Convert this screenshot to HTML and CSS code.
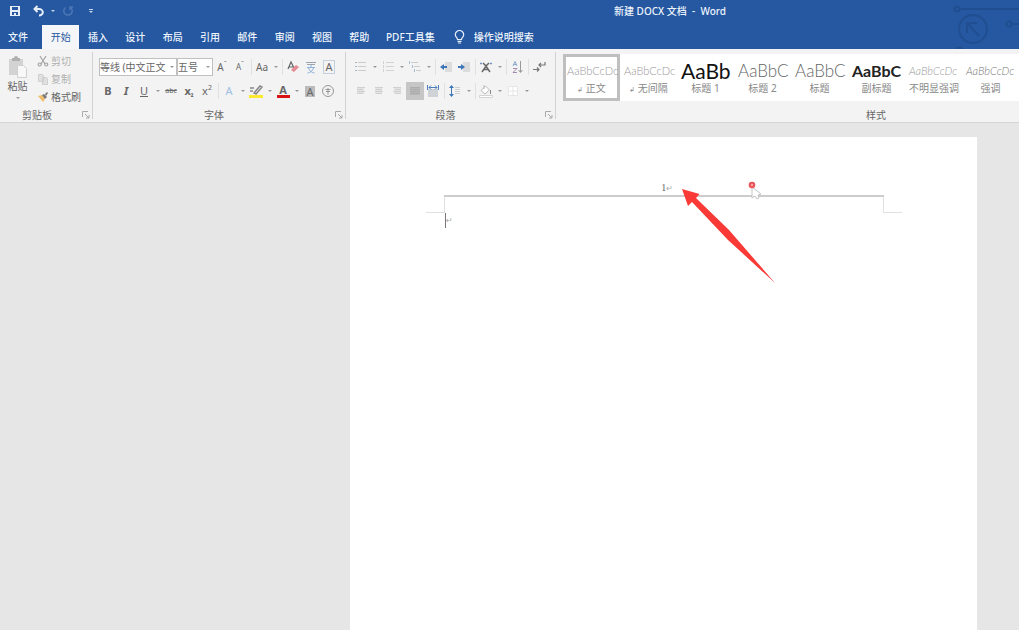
FILE: index.html
```html
<!DOCTYPE html>
<html lang="zh-CN">
<head>
<meta charset="utf-8">
<title>新建 DOCX 文档 - Word</title>
<link rel="stylesheet" href="styles.css">
</head>
<body>
<header class="top">
  <svg class="deco" width="80" height="49" viewBox="0 0 80 49" fill="none" stroke="#1f4a8c" stroke-width="2"><circle cx="18" cy="9" r="2.5"/><path d="M21 9H80M73 24h7M17 49a4 3 0 0 1 7 0"/><circle cx="70" cy="24" r="2.5"/><circle cx="34" cy="29" r="14"/><path d="M40 36 29 24M28 33V23h10"/></svg>
  <div class="titlebar">
    <div class="qat">
      <button class="qbtn" aria-label="保存"><svg width="12" height="12" viewBox="0 0 12 12"><path fill="#e6eefa" fill-rule="evenodd" d="M1 1h10v10H1zM3 2v3h6V2zM3 7v3h2V8h2v2h2V7z"/></svg></button>
      <button class="qbtn" aria-label="撤消"><svg width="14" height="12" viewBox="0 0 14 12" fill="none" stroke="#e6eefa" stroke-width="2"><path d="M5.500 1 2.500 4l3 3M3 4h4a3.500 3 0 0 1 0 6.500"/></svg></button>
      <i class="caret light"></i>
      <button class="qbtn" aria-label="重复"><svg width="12" height="12" viewBox="0 0 12 12" fill="none" stroke="#4c76b5" stroke-width="1.500"><path d="M3.500 2.500a4.200 4.200 0 1 0 5 0M8 5V2h3"/></svg></button>
      <button class="qbtn" aria-label="自定义快速访问工具栏"><svg width="6" height="6" viewBox="0 0 6 6" fill="#c8d7ee"><path d="M1 1h4v1H1zM1 3h4L3 5z"/></svg></button>
    </div>
    <h1 class="title">新建 DOCX 文档 &nbsp;-&nbsp; Word</h1>
  </div>
  <nav class="tabs">
    <button class="tab file">文件</button>
    <div class="tabgrid">
      <button class="tab active">开始</button><button class="tab">插入</button><button class="tab">设计</button><button class="tab">布局</button><button class="tab">引用</button><button class="tab">邮件</button><button class="tab">审阅</button><button class="tab">视图</button><button class="tab">帮助</button>
    </div>
    <button class="tab pdf">PDF工具集</button>
    <button class="tab tell"><svg width="11" height="14" viewBox="0 0 11 14" fill="none" stroke="#e6eefa" stroke-width="1.200"><path d="M3.500 9.500C3.500 7.500 1.300 7 1.300 4.700a4.200 4.200 0 0 1 8.400 0C9.700 7 7.500 7.500 7.500 9.500zM3.500 11.300h4M4 13h3"/></svg>操作说明搜索</button>
  </nav>
</header>

<section class="ribbon">
  <div class="group clipboard">
    <div class="controls clip">
      <button class="paste"><svg width="20" height="23" viewBox="0 0 20 23"><path fill="#d3d3d3" d="M1 3h14v16H1z"/><path fill="#b0b0b0" d="M4 2h2a2 2 0 0 1 4 0h2v3H4z"/><path fill="#f8f8f8" stroke="#d0d0d0" d="M9.500 9.500h6l3 3v9h-9z"/></svg><span>粘贴</span><i class="caret"></i></button>
      <div class="cliplist">
        <button class="clipitem off"><svg width="12" height="12" viewBox="0 0 12 12" fill="none" stroke="#a4a4a4" stroke-width="1.200"><path d="M3 1l5 8M9 1 4 9"/><circle cx="2.700" cy="9.500" r="1.500"/><circle cx="9.300" cy="9.500" r="1.500"/></svg>剪切</button>
        <button class="clipitem off"><svg width="12" height="12" viewBox="0 0 12 12" fill="#e0e0e0" stroke="#cfcfcf"><path d="M1.500 1.500h4l1 1v6h-5zM5.500 4.500h4l1 1v6h-5z"/></svg>复制</button>
        <button class="clipitem"><svg width="12" height="12" viewBox="0 0 12 12"><path fill="#f0bd6a" d="M1 5l4-1 3 4-2 3z"/><path fill="#777" d="M5 4l2-1 3 3-2 2zM8 3l2-2 1 1-2 3z"/></svg>格式刷</button>
      </div>
    </div>
    <div class="label"><span>剪贴板</span><button class="launch" aria-label="剪贴板设置"><svg width="8" height="8" viewBox="0 0 8 8" fill="none" stroke="#aaa"><path d="M.500 6V.500H6M3 3l4 4M7 4v3H4"/></svg></button></div>
  </div>

  <div class="group font">
    <div class="controls rows">
      <div class="row">
        <span class="combo"><select class="fontname" aria-label="字体"><option>等线 (中文正文</option></select><i class="caret"></i></span>
        <span class="combo"><select class="fontsize" aria-label="字号"><option>五号</option></select><i class="caret"></i></span>
        <button class="ib grow" aria-label="增大字号">A<sup>ˆ</sup></button>
        <button class="ib grow small" aria-label="减小字号">A<sup>ˇ</sup></button>
        <i class="sep"></i>
        <button class="ib aa" aria-label="更改大小写">Aa</button><i class="caret"></i>
        <i class="sep"></i>
        <button class="ib" aria-label="清除格式"><svg width="14" height="14" viewBox="0 0 14 14"><path d="M2 9 5 2l3 6M3 7h4" fill="none" stroke="#666" stroke-width="1.200"/><path fill="#e58a92" d="M5 10l5-5 3 2-5 5z"/></svg></button>
        <button class="ib" aria-label="拼音指南"><svg width="14" height="14" viewBox="0 0 14 14" fill="none"><path stroke="#9aa3ae" d="M2 2.500h10M3 4.500h8"/><path stroke="#8fb3dc" d="M3 7.500h8M4.500 8c1 3 3 4.500 6 5M9.500 8c-1 3-3 4.500-6 5M7 5v2"/></svg></button>
        <button class="ib boxed" aria-label="字符边框"><span>A</span></button>
      </div>
      <div class="row">
        <button class="ib b">B</button><button class="ib it">I</button><button class="ib u">U</button><i class="caret"></i>
        <button class="ib strike">abc</button><button class="ib b">x<sub>₂</sub></button><button class="ib">x<sup>2</sup></button>
        <i class="sep"></i>
        <button class="ib effect">A</button><i class="caret"></i>
        <button class="ib" aria-label="突出显示"><svg width="14" height="14" viewBox="0 0 14 14"><path fill="none" stroke="#888" stroke-width="1.500" d="M1 4h4M1 7h3M5 9l6-7 2 1-6 7z"/><path fill="#fbea2e" d="M0 11h14v3H0z"/></svg></button><i class="caret"></i>
        <button class="ib fc"><span>A</span></button><i class="caret"></i>
        <button class="ib shade"><span>A</span></button>
        <button class="ib" aria-label="带圈字符"><svg width="14" height="14" viewBox="0 0 14 14" fill="none" stroke="#999"><circle cx="7" cy="7" r="5.500"/><path d="M4.500 5.500h5M7 4v6.500M5 7.500h4"/></svg></button>
      </div>
    </div>
    <div class="label"><span>字体</span><button class="launch" aria-label="字体设置"><svg width="8" height="8" viewBox="0 0 8 8" fill="none" stroke="#aaa"><path d="M.500 6V.500H6M3 3l4 4M7 4v3H4"/></svg></button></div>
  </div>

  <div class="group para">
    <div class="controls rows">
      <div class="row">
        <button class="ib" aria-label="项目符号"><svg width="14" height="14" viewBox="0 0 14 14"><path stroke="#ccc" d="M4 2.500h8M4 6.500h8M4 10.500h8"/><path fill="#a9b3c1" d="M1 2h2v1H1zM1 6h2v1H1zM1 10h2v1H1z"/></svg></button><i class="caret"></i>
        <button class="ib" aria-label="编号"><svg width="14" height="14" viewBox="0 0 14 14"><path stroke="#d2d2d2" d="M5 2.500h8M5 6.500h8M5 10.500h8M2.500 1v3M2.500 5v3M2.500 9v3"/></svg></button><i class="caret"></i>
        <button class="ib" aria-label="多级列表"><svg width="14" height="14" viewBox="0 0 14 14"><path stroke="#ccc" d="M3 2.500h7M6 6.500h6M8 10.500h5"/><path stroke="#a9bcd6" d="M1.500 1v3M4.500 5v3M6.500 9v3"/></svg></button><i class="caret"></i>
        <i class="sep"></i>
        <button class="ib" aria-label="减少缩进量"><svg width="14" height="14" viewBox="0 0 14 14"><path fill="#dcdcdc" d="M6 2h7v10H6z"/><path fill="#3f76b8" d="M1 7l4-3v2h3v2H5v2z"/></svg></button>
        <button class="ib" aria-label="增加缩进量"><svg width="14" height="14" viewBox="0 0 14 14"><path fill="#dcdcdc" d="M6 2h7v10H6z"/><path fill="#3f76b8" d="M8 7 4 4v2H1v2h3v2z"/></svg></button>
        <i class="sep"></i>
        <button class="ib" aria-label="中文版式"><svg width="14" height="14" viewBox="0 0 14 14" fill="none" stroke="#666" stroke-width="1.500"><path d="M3 12 7 6l4 6M4 3l3 3 3-3M4.500 9.500h5"/><path stroke="#6f94c4" d="M1 3.500h2M11 3.500h2"/></svg></button><i class="caret"></i>
        <i class="sep"></i>
        <button class="ib" aria-label="排序"><svg width="14" height="14" viewBox="0 0 14 14" fill="none"><path stroke="#8aa7cd" d="M3 6l2-4.500L7 6M3.500 4.500h3"/><path stroke="#a48db0" d="M3 8.500h4L3 12.500h4"/><path stroke="#999" d="M10.500 1v11M8.500 10l2 2.500 2-2.500"/></svg></button>
        <i class="sep"></i>
        <button class="ib" aria-label="显示编辑标记"><svg width="14" height="14" viewBox="0 0 14 14" fill="none" stroke="#777" stroke-width="1.200"><path d="M1 9.500h6M5 7.500l2 2-2 2M13 2v3H7M9 3 7 5l2 2"/></svg></button>
      </div>
      <div class="row">
        <button class="ib" aria-label="左对齐"><svg width="10" height="10" viewBox="0 0 10 10" stroke="#d0d0d0"><path fill="#e3e3e3" stroke="none" d="M1 1h7v7H1z"/><path d="M1 1.500h8M1 3.500h6M1 5.500h8M1 7.500h6"/></svg></button>
        <button class="ib" aria-label="居中"><svg width="10" height="10" viewBox="0 0 10 10" stroke="#d0d0d0"><path fill="#e3e3e3" stroke="none" d="M1 1h7v7H1z"/><path d="M1 1.500h8M2 3.500h6M1 5.500h8M2 7.500h6"/></svg></button>
        <button class="ib" aria-label="右对齐"><svg width="10" height="10" viewBox="0 0 10 10" stroke="#d0d0d0"><path fill="#e3e3e3" stroke="none" d="M2 1h7v7H2z"/><path d="M1 1.500h8M3 3.500h6M1 5.500h8M3 7.500h6"/></svg></button>
        <button class="ib on" aria-label="两端对齐"><svg width="12" height="12" viewBox="0 0 12 12" stroke="#adadad"><path fill="#b7b7b7" stroke="none" d="M1 2h10v8H1z"/><path d="M1 2.500h10M1 4.500h10M1 6.500h10M1 8.500h10"/></svg></button>
        <button class="ib" aria-label="分散对齐"><svg width="14" height="14" viewBox="0 0 14 14"><path fill="#cfd3d8" d="M2 5h10v8H2z"/><path fill="none" stroke="#4d7fbd" d="M1.500 1v5M12.500 1v5M3 3.500h8M5 1.500l-2 2 2 2M9 1.500l2 2-2 2"/></svg></button>
        <i class="sep"></i>
        <button class="ib" aria-label="行距"><svg width="14" height="14" viewBox="0 0 14 14"><path fill="#cfcfcf" d="M7 3h5v1H7zM7 5h5v1H7zM7 7h5v1H7zM7 9h5v1H7z"/><path fill="#3f76b8" d="M3.500 1 6 4H4v6h2l-2.500 3L1 10h2V4H1z"/></svg></button><i class="caret"></i>
        <i class="sep"></i>
        <button class="ib" aria-label="底纹"><svg width="14" height="14" viewBox="0 0 14 14"><path fill="#fff" stroke="#bbb" d="M2 6.500 6.500 2l4 4-4.500 4zM5 1v4"/><path stroke="#888" d="M11.500 6v4"/><path fill="#fff" stroke="#d4d4d4" d="M.500 11.500h13v2H.500z"/></svg></button><i class="caret"></i>
        <button class="ib" aria-label="边框"><svg width="14" height="14" viewBox="0 0 14 14"><path fill="#fff" stroke="#e6e6e6" d="M2.500 2.500h9v9h-9zM7 3v9M2 7h10"/></svg></button><i class="caret"></i>
      </div>
    </div>
    <div class="label"><span>段落</span><button class="launch" aria-label="段落设置"><svg width="8" height="8" viewBox="0 0 8 8" fill="none" stroke="#aaa"><path d="M.500 6V.500H6M3 3l4 4M7 4v3H4"/></svg></button></div>
  </div>

  <div class="group styles">
    <div class="gallery">
      <button class="style sel"><span class="sample">AaBbCcDc</span><span class="name"><small>↲</small> 正文</span></button>
      <button class="style"><span class="sample">AaBbCcDc</span><span class="name"><small>↲</small> 无间隔</span></button>
      <button class="style"><span class="sample h1">AaBb</span><span class="name">标题 1</span></button>
      <button class="style"><span class="sample h2">AaBbC</span><span class="name">标题 2</span></button>
      <button class="style"><span class="sample h2">AaBbC</span><span class="name">标题</span></button>
      <button class="style"><span class="sample sub">AaBbC</span><span class="name">副标题</span></button>
      <button class="style"><span class="sample em">AaBbCcDc</span><span class="name">不明显强调</span></button>
      <button class="style"><span class="sample em dark">AaBbCcDc</span><span class="name">强调</span></button>
    </div>
    <div class="label"><span>样式</span></div>
  </div>
</section>

<main class="workspace">
  <article class="page">
    <div class="pagehead"><span>1</span><small>↵</small></div>
    <div class="corners"><i class="cl"></i><i class="cr"></i></div>
    <div class="text"><i class="cursor"></i><small>↵</small></div>
    <svg class="pointer" width="14" height="20" viewBox="0 0 14 20"><path d="M4 6v11l3-2 2 3 2-1-1-3 3-1z" fill="#fff" stroke="#c4c4c4"/><circle cx="4" cy="4" r="3.300" fill="#ea5558"/><circle cx="4" cy="4" r="1.200" fill="#f7a5a5"/></svg>
    <svg class="arrow" width="94" height="95" viewBox="0 0 94 95"><path fill="#f93a37" d="M0 0l17.500 5-3.500 4L47 41l46 53-47-43L10 13l-4 4z"/></svg>
  </article>
</main>
</body>
</html>
```
FILE: styles.css
```css
* { box-sizing: border-box; }
body {
  margin: 0;
  min-height: 100vh;
  display: flex;
  flex-direction: column;
  overflow: hidden;
  background: #e6e6e6;
  color: #666;
  font: 10px/14px "Noto Sans", "Noto Sans CJK SC", sans-serif;
}
button {
  margin: 0;
  padding: 0;
  border: 0;
  background: none;
  color: inherit;
  font: inherit;
}
svg { display: block; flex: none; }

.top { position: relative; background: #2558a0; color: #eef4fd; }
.deco { position: absolute; right: 0; top: 0; opacity: .7; }
.titlebar { display: flex; align-items: center; height: 21px; }
.qat { display: flex; align-items: center; width: 321px; padding-left: 9px; }
.qbtn { display: grid; place-items: center; width: 12px; height: 20px; margin-right: 11px; }
.qbtn + .caret { margin-left: -7px; margin-right: 5px; }
.title { flex: 1; margin: 0; text-align: center; font-size: 10px; line-height: 20px; font-weight: 500; }

.tabs { display: flex; height: 28px; padding-top: 4px; }
.tab { height: 24px; font-weight: 500; white-space: nowrap; }
.file { width: 42px; padding-right: 6px; }
.tabgrid { display: grid; grid-template-columns: repeat(9, 1fr); width: 336px; }
.tab.active { background: #f5f6f8; color: #2558a0; font-weight: 400; }
.pdf { padding: 0 8px; }
.tell { display: flex; align-items: center; gap: 9px; padding-left: 11px; }

.caret { display: grid; place-items: center; width: 9px; height: 8px; flex: none; }
.caret::after { content: ""; border: 2px solid transparent; border-top-color: #999; border-bottom: 0; }
.caret.light::after { border-top-color: #c8d7ee; }

.ribbon {
  display: flex;
  height: 74px;
  overflow: hidden;
  background: #f3f3f3;
  border-bottom: 1px solid #d5d5d5;
}
.group { display: flex; flex-direction: column; flex: none; position: relative; padding-top: 5px; }
.group::after { content: ""; position: absolute; right: 0; top: 3px; bottom: 3px; border-right: 1px solid #d2d2d2; }
.clipboard { width: 93px; }
.font { width: 253px; }
.para { width: 210px; }
.styles { width: 640px; }
.controls { flex: 1; }
.label { display: flex; align-items: center; height: 14px; }
.label span { flex: 1; text-align: center; }
.clipboard .label span { padding-right: 8px; }
.launch { width: 11px; height: 8px; }

.clip { display: flex; }
.paste { display: flex; flex-direction: column; align-items: center; justify-content: flex-start; width: 35px; padding-top: 2px; }
.paste .caret { margin-top: 1px; }
.cliplist { display: flex; flex-direction: column; justify-content: flex-start; height: 50px; padding-left: 2px; margin-top: -2px; }
.clipitem { display: flex; align-items: center; gap: 2px; height: 18px; flex: none; }
.off { color: #b0b0b0; }

.rows { display: flex; flex-direction: column; gap: 6px; padding: 4px 0 0 6px; }
.row { display: flex; align-items: center; height: 18px; }
.ib { display: grid; grid-auto-flow: column; place-items: center; place-content: center; width: 18px; height: 18px; font-size: 11px; flex: none; }
.ib.on { background: #c6c6c6; }
.ib sup, .ib sub { font-size: 7px; line-height: 8px; }
.ib sup { align-self: start; }
.ib sub { align-self: end; }
.sep { width: 1px; height: 16px; margin: 0 1px 0 2px; background: #e0e0e0; flex: none; }
.combo { position: relative; }
.combo .caret { position: absolute; right: 1px; top: 5px; pointer-events: none; }
select {
  display: block;
  height: 18px;
  margin: 0;
  padding: 0;
  border: 1px solid #c0c0c0;
  border-radius: 0;
  appearance: none;
  background: #fff;
  color: #666;
  font: inherit;
}
.fontname { width: 78px; }
.fontsize { width: 36px; }
.ib.grow { font-size: 10px; }
.ib.small { font-size: 8px; }
.ib.aa { font-size: 10px; }
.b { font-weight: 700; }
.it { font-weight: 700; font-style: italic; }
.u { text-decoration: underline; }
.ib.strike { font-size: 7px; text-decoration: line-through; }
.effect { color: #9dbfe2; }
.boxed span { border: 1px solid #c5d0de; width: 12px; line-height: 12px; }
.fc span { width: 13px; line-height: 11px; font-weight: 700; border-bottom: 3px solid #d81416; }
.shade span { width: 10px; line-height: 11px; background: #bbb; }

.gallery { display: flex; flex: 1; margin: 0 0 7px 7px; background: #fff; }
.style { display: flex; flex-direction: column; width: 57px; padding: 4px 0 0 1px; border: 3px solid transparent; color: #888; }
.style.sel { border-color: #bfbfbf; }
.sample {
  width: 50px;
  height: 20px;
  text-align: left;
  white-space: nowrap;
  color: #999;
  font: 300 11px/20px Lato, sans-serif;
}
.h1 { font-size: 21px; font-weight: 400; color: #111; }
.h2 { font-size: 17px; color: #666; }
.sub { font-size: 16px; font-weight: 700; color: #222; }
.em { font-style: italic; }
.dark { color: #777; }
.name { width: 49px; text-align: center; white-space: nowrap; }
.name small { font-size: 7px; }

.workspace { flex: 1; display: flex; padding: 14px 42px 0 350px; }
.page { position: relative; flex: 1; padding: 0 93px 0 94px; background: #fff; }
.pagehead { padding: 44px 0 0 6px; height: 60px; border-bottom: 2px solid #ccc; text-align: center; font-family: "Liberation Serif", serif; }
.page small { font: 8px/8px "DejaVu Sans", sans-serif; color: #aaa; }
.corners { display: flex; justify-content: space-between; margin: 0 -18px; }
.corners i { width: 19px; height: 16px; border-bottom: 1px solid #e0e0e0; }
.corners .cl { border-right: 1px solid #e0e0e0; }
.corners .cr { border-left: 1px solid #e0e0e0; }
.text { display: flex; align-items: center; }
.cursor { width: 1px; height: 15px; margin-left: 1px; background: #777; }
.pointer { position: absolute; left: 398px; top: 44px; }
.arrow { position: absolute; left: 332px; top: 52px; }
```
